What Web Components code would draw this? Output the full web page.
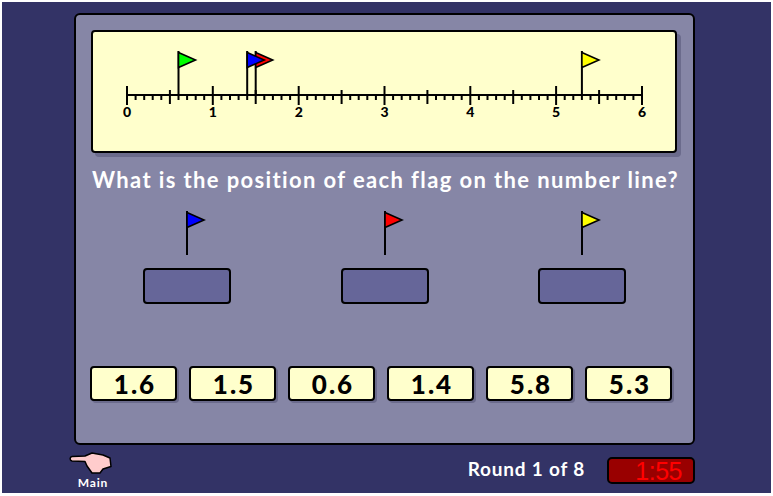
<!DOCTYPE html>
<html>
<head>
<meta charset="utf-8">
<title>Number line flags</title>
<style>
  html, body { margin: 0; padding: 0; background: #fff; }
  body { width: 773px; height: 496px; overflow: hidden; font-family: "Lato", "Open Sans", sans-serif; }
</style>
</head>
<body>
<game-stage>
  <number-line></number-line>
  <h1 slot="question">What is the position of each flag on the number line?</h1>
  <flag-target slot="targets" color="#0000ff"></flag-target>
  <flag-target slot="targets" color="#ff0000"></flag-target>
  <flag-target slot="targets" color="#ffff00"></flag-target>
  <answer-card slot="answers">1.6</answer-card>
  <answer-card slot="answers">1.5</answer-card>
  <answer-card slot="answers">0.6</answer-card>
  <answer-card slot="answers">1.4</answer-card>
  <answer-card slot="answers">5.8</answer-card>
  <answer-card slot="answers">5.3</answer-card>
  <main-button slot="footer"></main-button>
  <round-status slot="footer" round="Round 1 of 8" time="1:55"></round-status>
</game-stage>

<script>
// small svg flag, pole runs the full height of the svg
function flagSvg (color, poleHeight) {
  return `<svg width="24" height="${poleHeight}" viewBox="0 0 24 ${poleHeight}" style="display:block">
    <path d="M2 ${poleHeight}V0" stroke="#000" stroke-width="2" fill="none"/>
    <path d="M2 1.5L19 9L2 16.5Z" fill="${color}" stroke="#000" stroke-width="1.6"/>
  </svg>`;
}

class GameStage extends HTMLElement {
  constructor () {
    super();
    this.attachShadow({ mode: 'open' }).innerHTML = `
      <style>
        :host { display: block; box-sizing: border-box; width: 769px; height: 491px; margin: 2px 0 0 2px; background: #333366; padding: 11px 0 0 72px; }
        .panel { box-sizing: border-box; width: 621px; height: 432px; background: #8686a6; border: 2px solid #000; border-radius: 6px; padding: 15px 13px 0 15px; }
        .question { margin-top: 13px; height: 30px; text-align: center; }
        ::slotted(h1) { margin: 0; font-size: 22px; line-height: 28px; font-weight: 700; color: #fff; letter-spacing: 1.38px; white-space: nowrap; }
        .targets { display: flex; justify-content: space-between; margin: 15px 54px 0 52px; }
        .answers { display: flex; justify-content: space-between; margin: 62px 8px 0 -1px; }
        .footer { display: flex; justify-content: space-between; align-items: flex-start; width: 627px; margin: 7px 0 0 -6px; }
      </style>
      <div class="panel">
        <slot></slot>
        <div class="question"><slot name="question"></slot></div>
        <div class="targets"><slot name="targets"></slot></div>
        <div class="answers"><slot name="answers"></slot></div>
      </div>
      <div class="footer"><slot name="footer"></slot></div>`;
  }
}

class NumberLine extends HTMLElement {
  constructor () {
    super();
    const root = this.attachShadow({ mode: 'open' });
    const x0 = 34, unit = 85.83, axis = 63;
    let ticks = '';
    for (let i = 0; i <= 60; i++) {
      const x = (x0 + i * unit / 10).toFixed(1);
      if (i % 10 === 0) ticks += `<path d="M${x} ${axis - 9}v19"/>`;
      else if (i % 5 === 0) ticks += `<path d="M${x} ${axis - 5}v14"/>`;
      else ticks += `<path d="M${x} ${axis}v5"/>`;
    }
    let labels = '';
    for (let i = 0; i <= 6; i++) {
      labels += `<span style="left:${(x0 + i * unit - 15).toFixed(1)}px">${i}</span>`;
    }
    const flag = (value, color) => {
      const x = x0 + value * unit;
      return `<g transform="translate(${x.toFixed(1)} 0)">
        <path d="M0 ${axis}V19" stroke="#000" stroke-width="2"/>
        <path d="M0 20.5L17 28L0 35.5Z" fill="${color}" stroke="#000" stroke-width="1.6"/>
      </g>`;
    };
    root.innerHTML = `
      <style>
        :host { display: block; position: relative; box-sizing: border-box; width: 586px; height: 123px; background: #ffffcc; border: 2px solid #000; border-radius: 4px; box-shadow: 4px 4px 0 #6b6b8c; }
        svg { position: absolute; left: 0; top: 0; }
        span { position: absolute; top: 72px; width: 30px; text-align: center; font-size: 14px; font-weight: 900; line-height: 16px; color: #000; }
      </style>
      <svg width="582" height="119"><g stroke="#000" stroke-width="2" fill="none">
        <path d="M${x0} ${axis}H${x0 + 6 * unit}"/>${ticks}</g>
        ${flag(0.6, '#00ff00')}${flag(1.5, '#ff0000')}${flag(1.4, '#0000ff')}${flag(5.3, '#ffff00')}
      </svg>
      ${labels}`;
  }
}

class FlagTarget extends HTMLElement {
  constructor () {
    super();
    this.attachShadow({ mode: 'open' }).innerHTML = `
      <style>
        :host { display: flex; flex-direction: column; width: 88px; }
        .flag { margin-left: 42px; height: 44px; }
        .slot { box-sizing: border-box; width: 88px; height: 36px; margin-top: 13px; background: #666699; border: 2px solid #000; border-radius: 4px; }
      </style>
      <div class="flag">${flagSvg(this.getAttribute('color'), 44)}</div>
      <div class="slot"></div>`;
  }
}

class AnswerCard extends HTMLElement {
  constructor () {
    super();
    this.attachShadow({ mode: 'open' }).innerHTML = `
      <style>
        :host { display: flex; align-items: center; justify-content: center; box-sizing: border-box; width: 87px; height: 35px; padding-left: 3px; background: #ffffcc; border: 2px solid #000; border-radius: 4px; box-shadow: 2px 2px 0 #6b6b8c; font-size: 26px; font-weight: 900; color: #000; letter-spacing: 2px; }
      </style>
      <slot></slot>`;
  }
}

class MainButton extends HTMLElement {
  constructor () {
    super();
    this.attachShadow({ mode: 'open' }).innerHTML = `
      <style>
        :host { display: flex; flex-direction: column; align-items: center; width: 46px; }
        svg { display: block; }
        span { font-size: 12px; font-weight: 700; line-height: 12px; color: #fff; margin: 2px 0 0 4px; letter-spacing: 0.8px; }
      </style>
      <svg width="44" height="23" viewBox="0 0 44 23">
        <path d="M3 4.5L16 4L23 1L34 3L41 6L42 14.5L34 17L31 21L23 21L18 14L16 9.5L3 9C0.5 8.5 0.5 5 3 4.5Z" fill="#ffcccc" stroke="#000" stroke-width="1.5" stroke-linejoin="round"/>
      </svg>
      <span>Main</span>`;
  }
}

class RoundStatus extends HTMLElement {
  constructor () {
    super();
    this.attachShadow({ mode: 'open' }).innerHTML = `
      <style>
        :host { display: flex; align-items: flex-start; gap: 22px; margin-top: 5px; }
        .round { font-size: 19px; line-height: 24px; font-weight: 700; color: #fff; letter-spacing: 0.8px; white-space: nowrap; }
        .timer { box-sizing: border-box; width: 88px; height: 27px; background: #990000; border: 2px solid #000; border-radius: 5px; color: #ff0000; font-family: "Liberation Sans", sans-serif; font-size: 25px; line-height: 24px; text-align: right; padding-right: 11px; letter-spacing: -0.5px; }
      </style>
      <span class="round">${this.getAttribute('round')}</span>
      <div class="timer">${this.getAttribute('time')}</div>`;
  }
}

customElements.define('game-stage', GameStage);
customElements.define('number-line', NumberLine);
customElements.define('flag-target', FlagTarget);
customElements.define('answer-card', AnswerCard);
customElements.define('main-button', MainButton);
customElements.define('round-status', RoundStatus);
</script>
</body>
</html>
